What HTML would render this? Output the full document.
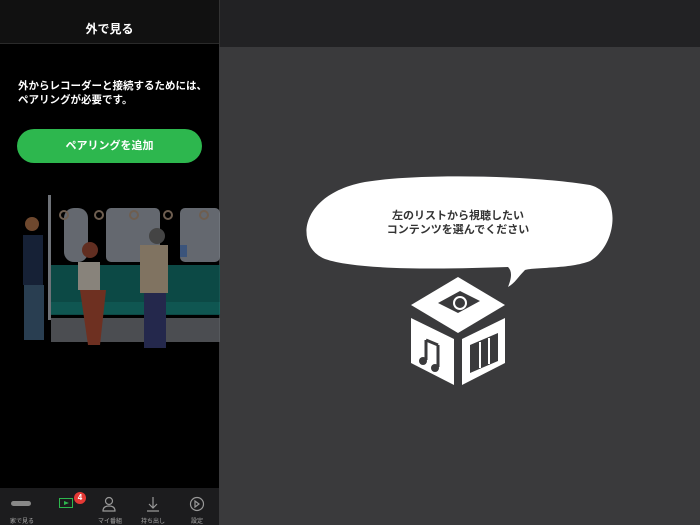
<!DOCTYPE html>
<html><head><meta charset="utf-8"><style>
*{margin:0;padding:0;box-sizing:border-box}
body{width:700px;height:525px;overflow:hidden;background:#3a3a3c;font-family:"Liberation Sans","Noto Sans CJK JP",sans-serif;position:relative}
.left{position:absolute;left:0;top:0;width:219px;height:525px;background:#000}
.hdr{height:44px;border-bottom:1px solid #2a2a2a;color:#fff;font-size:12px;font-weight:bold;text-align:center;line-height:58px;background:#111}
.msg{position:absolute;left:18px;top:79px;color:#fff;font-size:10.5px;font-weight:bold;line-height:14px}
.btn{position:absolute;left:17px;top:129px;width:185px;height:34px;border-radius:17px;background:#2db74e;color:#fff;font-size:11px;font-weight:bold;text-align:center;line-height:34px}
.top{position:absolute;left:219px;top:0;width:481px;height:47px;background:#222224;border-left:1px solid #333}
.tab{position:absolute;left:0;top:488px;width:219px;height:37px;background:#1c1c1e}
.tl{position:absolute;top:28px;font-size:6px;color:#aaa;width:40px;text-align:center}
</style></head><body>
<div class="left">
<div class="hdr">外で見る</div>
<div class="msg">外からレコーダーと接続するためには、<br>ペアリングが必要です。</div>
<div class="btn">ペアリングを追加</div>
<svg style="position:absolute;left:0;top:190px;opacity:0.8" width="220" height="170">
<rect x="48" y="5" width="3" height="125" fill="#8a8f96"/>
<rect x="51" y="75" width="169" height="50" fill="#0f5c57"/>
<rect x="51" y="112" width="169" height="12" fill="#136c66"/>
<rect x="51" y="128" width="169" height="24" fill="#5e6166"/>
<rect x="64" y="18" width="24" height="54" rx="10" fill="#7d838b"/>
<rect x="106" y="18" width="54" height="54" rx="5" fill="#7d838b"/>
<rect x="180" y="18" width="40" height="54" rx="5" fill="#7d838b"/>
<g fill="none" stroke="#8a7664" stroke-width="2"><circle cx="64" cy="25" r="4"/><circle cx="99" cy="25" r="4"/><circle cx="134" cy="25" r="4"/><circle cx="168" cy="25" r="4"/><circle cx="204" cy="25" r="4"/></g>
<rect x="23" y="45" width="20" height="50" fill="#1c2a44"/><circle cx="32" cy="34" r="7" fill="#8a5a3a"/>
<rect x="24" y="95" width="20" height="55" fill="#344e66"/>
<circle cx="90" cy="60" r="8" fill="#7a3a2a"/><rect x="78" y="72" width="22" height="28" fill="#aaa49a"/>
<path d="M80 100h26l-6 55h-12z" fill="#8a3d2a"/>
<circle cx="157" cy="46" r="8" fill="#555"/><rect x="140" y="55" width="28" height="48" fill="#a0907a"/>
<rect x="144" y="103" width="22" height="55" fill="#2e3260"/>
<rect x="180" y="55" width="7" height="12" fill="#4a6a9a"/>
</svg>
<div class="tab">
<div style="position:absolute;left:11px;top:13px;width:20px;height:5px;border-radius:3px;background:#888"></div>
<div style="position:absolute;left:59px;top:10px;width:14px;height:10px;border:1.5px solid #2db74e"></div>
<div style="position:absolute;left:64px;top:13px;width:0;height:0;border-left:5px solid #2db74e;border-top:2.5px solid transparent;border-bottom:2.5px solid transparent"></div>
<div style="position:absolute;left:74px;top:4px;width:12px;height:12px;border-radius:6px;background:#e53935;color:#fff;font-size:8px;font-weight:bold;text-align:center;line-height:12px">4</div>
<svg style="position:absolute;left:101px;top:8px" width="16" height="16" fill="none" stroke="#999" stroke-width="1.2"><circle cx="8" cy="5" r="3.5"/><path d="M2 15c0-4 3-5 6-5s6 1 6 5z"/></svg>
<svg style="position:absolute;left:145px;top:8px" width="16" height="16" fill="none" stroke="#999" stroke-width="1.2"><path d="M8 1v11M4 8l4 4 4-4M2 15h12"/></svg>
<svg style="position:absolute;left:189px;top:8px" width="16" height="16" fill="none" stroke="#999" stroke-width="1.2"><circle cx="8" cy="8" r="6.5"/><path d="M6 5l4 3-4 3z"/></svg>
<div class="tl" style="left:2px">家で見る</div><div class="tl" style="left:90px">マイ番組</div><div class="tl" style="left:133px">持ち出し</div><div class="tl" style="left:177px">設定</div>
</div>
</div>
<div class="top"></div>
<svg style="position:absolute;left:300px;top:175px" width="320" height="215">
<path d="M60 8C110-2 230 0 290 10C322 18 318 70 290 86C270 94 235 92 225 95C218 102 215 108 208 112C212 102 212 96 208 92C150 94 60 96 25 84C-5 72-2 22 60 8Z" fill="#fff"/>
<text x="158" y="44" font-size="11" font-weight="bold" fill="#333" text-anchor="middle" font-family="Liberation Sans,Noto Sans CJK JP,sans-serif">左のリストから視聴したい</text>
<text x="158" y="58" font-size="11" font-weight="bold" fill="#333" text-anchor="middle" font-family="Liberation Sans,Noto Sans CJK JP,sans-serif">コンテンツを選んでください</text>
<path d="M158 102L205 130L158 158L111 130Z" fill="#fff"/>
<path d="M111 143L154 164V210L111 188Z" fill="#fff"/>
<path d="M162 164L205 143V188L162 210Z" fill="#fff"/>
<path d="M138 128l22-12 20 10-22 12z" fill="#3a3a3c"/><circle cx="160" cy="128" r="6" fill="none" stroke="#fff" stroke-width="2"/>
<path d="M126 165v20M138 170v22M126 165l12 5" stroke="#3a3a3c" stroke-width="3" fill="none"/><circle cx="123" cy="186" r="4" fill="#3a3a3c"/><circle cx="135" cy="193" r="4" fill="#3a3a3c"/>
<path d="M170 170l28-12v28l-28 12z" fill="#3a3a3c"/><path d="M180 167v26M189 163v26" stroke="#fff" stroke-width="2"/>
</svg>
</body></html>
